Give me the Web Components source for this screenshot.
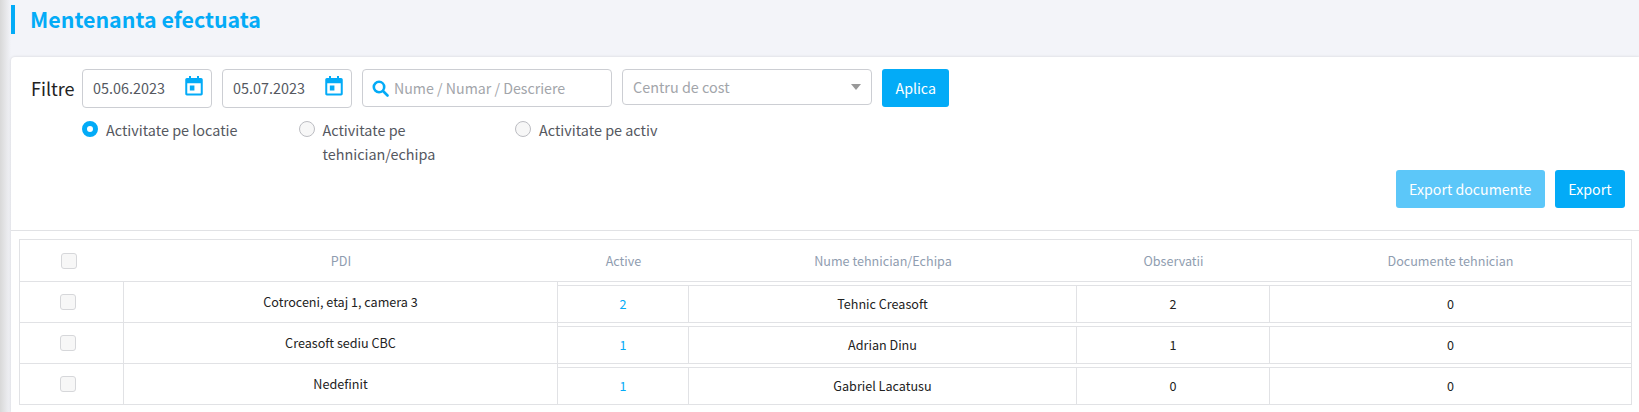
<!DOCTYPE html>
<html lang="ro">
<head>
<meta charset="UTF-8">
<title>Mentenanta efectuata</title>
<style>
    * { box-sizing: border-box; }
    html, body { margin: 0; height: 100%; }
    body {
        --blue: #03abf7;
        --line: #e1e2e5;
        --cols: 104px 434px 131px 388px 193px 1fr;
        font-family: "Noto Sans CJK SC", "Noto Sans", sans-serif;
        background: linear-gradient(90deg, #d8d8d8, #f3f4f9 11px);
        overflow: hidden;
    }
</style>
</head>
<body>
<page-title>Mentenanta efectuata</page-title>
<main-card>
    <filter-bar slot="filters">
        <date-field value="05.06.2023"></date-field>
        <date-field value="05.07.2023"></date-field>
        <search-field placeholder="Nume / Numar / Descriere"></search-field>
        <select-field placeholder="Centru de cost"></select-field>
        <app-button>Aplica</app-button>
        <radio-option slot="radios" checked>Activitate pe locatie</radio-option>
        <radio-option slot="radios">Activitate pe tehnician/echipa</radio-option>
        <radio-option slot="radios">Activitate pe activ</radio-option>
    </filter-bar>
    <app-button slot="actions" light>Export documente</app-button>
    <app-button slot="actions">Export</app-button>
    <data-table slot="table">
        <table-row header>
            <table-cell header><check-box></check-box></table-cell>
            <table-cell header>PDI</table-cell>
            <table-cell header>Active</table-cell>
            <table-cell header>Nume tehnician/Echipa</table-cell>
            <table-cell header>Observatii</table-cell>
            <table-cell header>Documente tehnician</table-cell>
        </table-row>
        <table-row>
            <table-cell><check-box></check-box></table-cell>
            <table-cell>Cotroceni, etaj 1, camera 3</table-cell>
            <table-cell inner link>2</table-cell>
            <table-cell inner>Tehnic Creasoft</table-cell>
            <table-cell inner>2</table-cell>
            <table-cell inner>0</table-cell>
        </table-row>
        <table-row>
            <table-cell><check-box></check-box></table-cell>
            <table-cell>Creasoft sediu CBC</table-cell>
            <table-cell inner link>1</table-cell>
            <table-cell inner>Adrian Dinu</table-cell>
            <table-cell inner>1</table-cell>
            <table-cell inner>0</table-cell>
        </table-row>
        <table-row>
            <table-cell><check-box></check-box></table-cell>
            <table-cell>Nedefinit</table-cell>
            <table-cell inner link>1</table-cell>
            <table-cell inner>Gabriel Lacatusu</table-cell>
            <table-cell inner>0</table-cell>
            <table-cell inner>0</table-cell>
        </table-row>
    </data-table>
</main-card>

<script>
    // small helper, every element is just a style + markup in an open shadow root
    function define(name, css, html, init) {
        customElements.define(name, class extends HTMLElement {
            constructor() {
                super();
                this.attachShadow({ mode: 'open' }).innerHTML = `<style>* { box-sizing: border-box; } ${css}</style>${html}`;
            }
            connectedCallback() {
                if (init) init(this, this.shadowRoot);
            }
        });
    }

    const fieldBox = `
        :host { display: block; height: 39px; background: #fff; border: 1px solid #ccced3; border-radius: 4px;
                font-size: 14.4px; color: #55585f; }
        .in { display: flex; align-items: center; height: 100%; line-height: 20px; }
    `;

    define('page-title', `
        :host { display: flex; align-items: center; height: 29px; margin: 5px 0 23px 11px; padding: 0 0 2px 15px;
                border-left: 4px solid var(--blue); color: var(--blue); font-size: 21.4px; font-weight: 700; line-height: 27px; }
    `, `<slot></slot>`);

    define('main-card', `
        :host { display: block; margin-left: 11px; height: 355px; padding-top: 12px; background: #fff;
                border-radius: 4px 0 0 0; box-shadow: 0 0 3px rgba(0,0,0,.14); }
        .actions { display: flex; justify-content: flex-end; gap: 10px; height: 38px; margin: 4px 14px 22px 0; }
        .rule { height: 1px; background: var(--line); }
    `, `
        <slot name="filters"></slot>
        <div class="actions"><slot name="actions"></slot></div>
        <div class="rule"></div>
        <slot name="table"></slot>
    `);

    define('filter-bar', `
        :host { display: block; padding-left: 20px; }
        .top { display: flex; align-items: flex-start; gap: 10px; height: 40px; }
        .label { width: 41px; font-size: 18px; line-height: 38px; color: #222; }
        .radios { display: flex; margin: 9px 0 0 51px; }
    `, `
        <div class="top"><div class="label">Filtre</div><slot></slot></div>
        <div class="radios"><slot name="radios"></slot></div>
    `);

    define('date-field', fieldBox + `
        :host { width: 130px; }
        .in { justify-content: space-between; padding: 0 7px 2px 10px; }
        svg { width: 20px; height: 22px; margin-top: -3px; fill: var(--blue); }
    `, `
        <div class="in"><span id="v"></span>
            <svg viewBox="0 0 24 24" preserveAspectRatio="none"><path d="M6 1h2.400v2.400h7.200V1H18v2.400h2.600c1 0 1.900.9 1.900 1.900v15.200c0 1-.9 1.900-1.900 1.900H3.400c-1 0-1.900-.9-1.900-1.900V5.300c0-1 .9-1.900 1.900-1.900H6V1zM3.900 9v11.100h16.200V9H3.900zM7 11.500h5.500V17H7v-5.500z"/></svg>
        </div>
    `, (el, root) => { root.getElementById('v').textContent = el.getAttribute('value'); });

    define('search-field', fieldBox + `
        :host { width: 250px; height: 38px; font-size: 14.200px; color: #a2a5aa; }
        .in { padding-left: 9px; gap: 5px; }
        svg { width: 17px; height: 17px; fill: none; stroke: var(--blue); stroke-width: 2.600; stroke-linecap: round; flex: none; }
    `, `
        <div class="in">
            <svg viewBox="0 0 17 17"><circle cx="7" cy="7" r="5.200"/><path d="M11 11l4.500 4.500"/></svg>
            <span id="v"></span>
        </div>
    `, (el, root) => { root.getElementById('v').textContent = el.getAttribute('placeholder'); });

    define('select-field', fieldBox + `
        :host { width: 250px; height: 36px; color: #a2a5aa; }
        .in { justify-content: space-between; padding: 0 10px; }
        i { width: 0; height: 0; border: 5px solid transparent; border-top: 6px solid #999; border-bottom: 0; }
    `, `
        <div class="in"><span id="v"></span><i></i></div>
    `, (el, root) => { root.getElementById('v').textContent = el.getAttribute('placeholder'); });

    define('app-button', `
        :host { display: block; height: 38px; padding: 0 13.500px; border-radius: 3px; background: var(--blue); color: #fff;
                font-size: 14.200px; line-height: 38px; }
        :host([light]) { background: #5cc7f9; }
    `, `<slot></slot>`);

    define('radio-option', `
        :host { display: flex; align-items: flex-start; gap: 8px; width: 216.500px; font-size: 14.400px; line-height: 24px; color: #55585f; }
        i { flex: none; width: 16px; height: 16px; margin-top: 3px; border-radius: 50%; background: #f7f7f7; border: 1px solid #bcbdc2; }
        :host([checked]) i { background: #fff; border: 5px solid var(--blue); }
        span { width: 160px; }
    `, `<i></i><span><slot></slot></span>`);

    define('data-table', `
        :host { display: block; margin: 8px 7px 0 8px; border: 1px solid var(--line); border-top-width: 1px; }
    `, `<slot></slot>`);

    define('table-row', `
        :host { display: grid; grid-template-columns: var(--cols); height: 41px; border-top: 1px solid var(--line); }
        :host([header]) { border-top: 0; }
    `, `<slot></slot>`);

    define('table-cell', `
        :host { display: flex; align-items: center; justify-content: center; border-right: 1px solid var(--line);
                font-size: 12.600px; line-height: 20px; color: #222; }
        :host([header]) { border-right: 0; color: #8f9db0; }
        :host([inner]) { margin-top: 3px; border-top: 1px solid var(--line); }
        :host([inner]:last-child) { border-right: 0; }
        :host([link]) { color: var(--blue); }
    `, `<slot></slot>`);

    define('check-box', `
        :host { display: block; width: 16px; height: 16px; margin-right: 7px; background: #f7f7f7; border: 1px solid #d6d7da; border-radius: 3px; }
    `, ``);
</script>
</body>
</html>
